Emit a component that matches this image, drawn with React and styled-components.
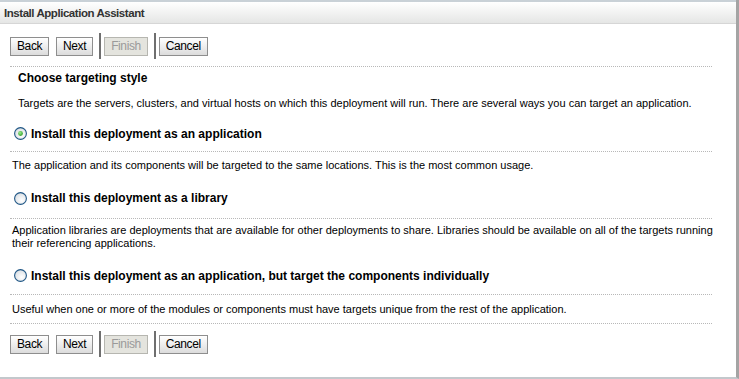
import styled, { createGlobalStyle } from 'styled-components';

const GlobalStyle = createGlobalStyle`
  html, body {
    margin: 0;
    padding: 0;
    background: #ffffff;
  }
  body {
    font-family: 'Liberation Sans', Arial, sans-serif;
    color: #000;
  }
`;

const options = [
  {
    label: 'Install this deployment as an application',
    desc: 'The application and its components will be targeted to the same locations. This is the most common usage.',
    checked: true,
    rowHeight: 35,
    descPad: '7px 0 6px',
  },
  {
    label: 'Install this deployment as a library',
    desc: 'Application libraries are deployments that are available for other deployments to share. Libraries should be available on all of the targets running their referencing applications.',
    checked: false,
    rowHeight: 40,
    descPad: '5px 0 7px',
  },
  {
    label: 'Install this deployment as an application, but target the components individually',
    desc: 'Useful when one or more of the modules or components must have targets unique from the rest of the application.',
    checked: false,
    rowHeight: 37,
    descPad: '8px 0 7px',
  },
];

const Radio = ({ checked }) => (
  <RadioIcon width="13" height="13" viewBox="0 0 13 13">
    <defs>
      <radialGradient id="rfill" cx="0.6" cy="0.65" r="0.7">
        <stop offset="0" stopColor="#ffffff" />
        <stop offset="1" stopColor="#d8dde2" />
      </radialGradient>
      <radialGradient id="rdot" cx="0.4" cy="0.35" r="0.7">
        <stop offset="0" stopColor="#9cf08f" />
        <stop offset="1" stopColor="#2c9a25" />
      </radialGradient>
    </defs>
    <circle cx="6.5" cy="6.5" r="5.9" fill="url(#rfill)" stroke="#1f5685" strokeWidth="1.1" />
    {checked && <circle cx="6.5" cy="6.5" r="2.4" fill="url(#rdot)" />}
  </RadioIcon>
);

const Buttons = ({ bottom }) => (
  <ButtonBar $bottom={bottom}>
    <Button>Back</Button>
    <Button>Next</Button>
    <Separator />
    <Button disabled>Finish</Button>
    <Separator />
    <Button>Cancel</Button>
  </ButtonBar>
);

const App = () => (
  <>
    <GlobalStyle />
    <Panel>
      <TitleBar>Install Application Assistant</TitleBar>
      <Buttons />
      <Dotted />
      <Heading>Choose targeting style</Heading>
      <Intro>
        Targets are the servers, clusters, and virtual hosts on which this deployment will run. There are
        several ways you can target an application.
      </Intro>
      {options.map((o) => (
        <div key={o.label}>
          <OptionRow $height={o.rowHeight}>
            <Radio checked={o.checked} />
            <OptionLabel>{o.label}</OptionLabel>
          </OptionRow>
          <Dotted />
          <Desc $pad={o.descPad}>{o.desc}</Desc>
        </div>
      ))}
      <Dotted />
      <Buttons bottom />
    </Panel>
  </>
);

export default App;

const Panel = styled.div`
  box-sizing: border-box;
  width: 739px;
  height: 379px;
  border-right: 3px solid #a4a4a4;
  border-bottom: 2px solid #c3c8cc;
  background: #ffffff;
`;

const TitleBar = styled.div`
  box-sizing: border-box;
  height: 24px;
  padding: 5px 0 0 4px;
  border-top: 2px solid #c9d1d7;
  border-bottom: 1px solid #d6d6d6;
  background: linear-gradient(#ffffff, #e5e6e5);
  font-size: 11.5px;
  font-weight: bold;
  color: #333;
  letter-spacing: -0.45px;
`;

const ButtonBar = styled.div`
  display: flex;
  align-items: center;
  height: 26px;
  padding: ${(p) => (p.$bottom ? '7px 0 0 10px' : '9px 0 7px 10px')};
`;

const Button = styled.button`
  box-sizing: border-box;
  height: 19px;
  margin: 0 7px 0 0;
  padding: 0 6px;
  border: 1px solid ${(p) => (p.disabled ? '#b6b6b0' : '#8e8e8e')};
  border-radius: 0;
  background: ${(p) => (p.disabled ? '#e4e4de' : 'linear-gradient(#ffffff, #dcdcdc)')};
  color: ${(p) => (p.disabled ? '#9a9a9a' : '#000')};
  font-family: 'Liberation Sans', Arial, sans-serif;
  font-size: 12px;
  line-height: 17px;
  letter-spacing: -0.4px;
`;

const Separator = styled.div`
  width: 2px;
  height: 26px;
  margin: 0 3px 0 -1px;
  background: #6f6f6f;
`;

const Dotted = styled.div`
  height: 0;
  margin: 0 24px 0 10px;
  border-top: 1px dotted #b8b8b8;
`;

const Heading = styled.div`
  height: 23px;
  padding-left: 18px;
  font-size: 12px;
  font-weight: bold;
  line-height: 23px;
`;

const Intro = styled.div`
  height: 26px;
  padding-left: 18px;
  font-size: 11px;
  line-height: 26px;
  white-space: nowrap;
`;

const OptionRow = styled.div`
  display: flex;
  align-items: center;
  height: ${(p) => p.$height}px;
  padding-left: 14px;
`;

const RadioIcon = styled.svg`
  flex: none;
  margin-right: 4px;
`;

const OptionLabel = styled.span`
  font-size: 12px;
  font-weight: bold;
`;

const Desc = styled.div`
  padding: ${(p) => p.$pad};
  margin: 0 12px 0 12px;
  font-size: 11px;
  line-height: 13px;
`;
